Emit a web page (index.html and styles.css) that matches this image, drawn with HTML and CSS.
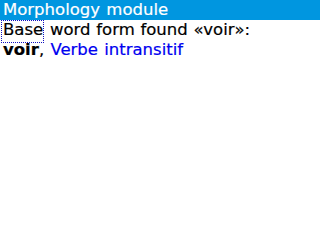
FILE: index.html
```html
<!DOCTYPE html>
<html>
<head>
<meta charset="utf-8">
<link rel="stylesheet" href="styles.css">
</head>
<body>
<div class="title">Morphology module</div>
<div class="line"><span class="focus">Base</span> word form found «voir»:</div>
<div class="line last"><b class="word">voir</b>, <span class="desc">Verbe intransitif</span></div>
</body>
</html>
```
FILE: styles.css
```css
html, body { margin: 0; padding: 0; background: #fff; }
body { width: 320px; height: 240px; font-family: "DejaVu Sans", sans-serif; font-size: 16.5px; word-spacing: 0.5px; color: #000; -webkit-text-stroke: 0.2px; }
.title { background: #0096e0; color: #fff; height: 20px; line-height: 20px; padding-left: 3px; word-spacing: 1px; }
.line { height: 20px; line-height: 20px; padding-left: 3px; white-space: nowrap; }
.last { line-height: 19px; word-spacing: 1px; }
.focus { display: inline-block; line-height: 18px; padding: 0 0 3px 0; margin-left: -2px; border: 1px dotted #1010c0; border-left-width: 1px; padding-left: 1px; }
.word { font-weight: bold; }
.desc { color: #0000f0; }
```
